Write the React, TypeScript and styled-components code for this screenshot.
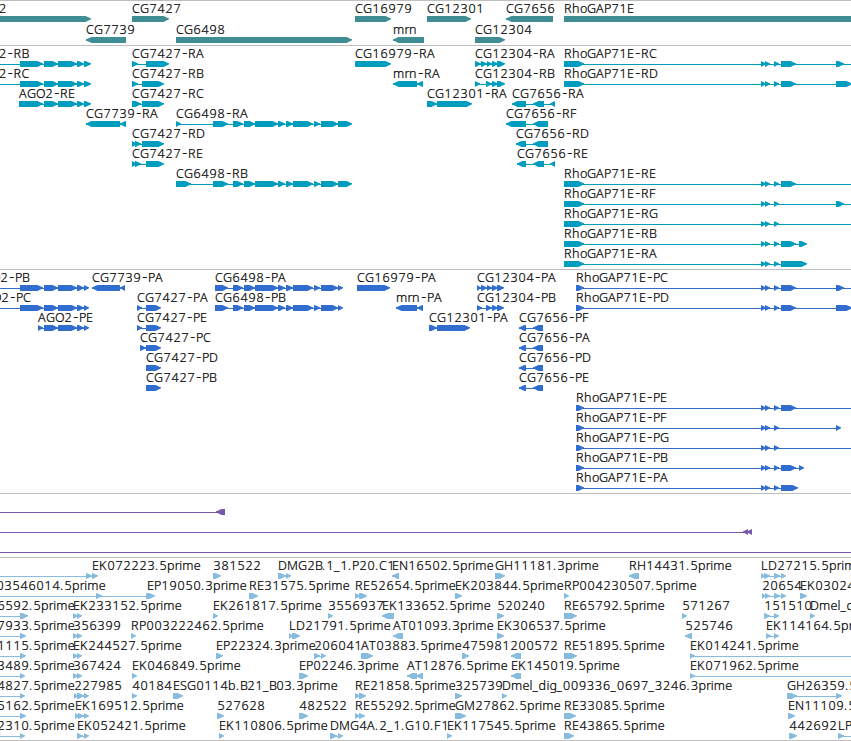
import styled, { createGlobalStyle } from 'styled-components'

const GlobalStyle = createGlobalStyle`
  body {
    margin: 0;
    background: #fff;
    overflow: hidden;
  }
`

const Browser = styled.main`
  display: flex;
  flex-direction: column;
  width: 851px;
  height: 741px;
  overflow: hidden;
  background: #fff;
`

const TrackPanel = styled.section<{ $height: number }>`
  box-sizing: border-box;
  flex: none;
  height: ${({ $height }) => $height}px;
  border-top: 1px solid #bebebe;
  overflow: hidden;
`

const EndRule = styled.div`
  flex: none;
  height: 1px;
  background: #bebebe;
`

const TrackChart = styled.svg<{ $color: string }>`
  display: block;
  color: ${({ $color }) => $color};
`

const Label = styled.text`
  font-family: 'Noto Sans', 'Open Sans', sans-serif;
  font-size: 12.5px;
  font-weight: 300;
  fill: #000;
  stroke: #000;
  stroke-width: 0.22px;
  white-space: pre;
`

const Dash = styled.tspan`
  font-size: 17px;
  stroke-width: 0;
`

interface Feature {
  row: number
  label: string
  x: number
  exons: number[][]
  reverse?: boolean
  from?: number
  to?: number
}

interface Extra {
  reverse?: boolean
  from?: number
  to?: number
}

const WIDTH = 851

// "20-43 44-58" -> [[20, 43], [44, 58]]
const parse = (spans: string) =>
  spans.split(' ').filter(Boolean).map((s) => s.split('-').map(Number))

const f = (row: number, label: string, x: number, spans: string, extra: Extra = {}): Feature => ({
  row,
  label,
  x,
  exons: parse(spans),
  ...extra,
})

const rev = { reverse: true }
const left = { from: 0 }
const right = { to: WIDTH }

const genes: Feature[] = [
  f(0, 'AGO2', -27.5, '0-91'),
  f(1, 'CG7739', 86, '86-126', rev),
  f(0, 'CG7427', 132, '132-169'),
  f(1, 'CG6498', 176, '176-352'),
  f(0, 'CG16979', 355, '355-391'),
  f(1, 'mrn', 393, '393-424', rev),
  f(0, 'CG12301', 427, '427-471'),
  f(1, 'CG12304', 475, '475-505'),
  f(0, 'CG7656', 506, '506-553', rev),
  f(0, 'RhoGAP71E', 564, '564-870'),
]

const ago2 = '44-58 58-77 77-84'
const cg6498 = '233-243 244-255 255-278 278-285 286-293 293-313 314-320 321-338'
const rho = '761-766 765-770 774-779'

const transcripts: Feature[] = [
  f(0, 'AGO2-RB', -27.5, `20-43 ${ago2} 84-91`, left),
  f(1, 'AGO2-RC', -27.5, `20-43 ${ago2} 84-91`, left),
  f(2, 'AGO2-RE', 19, `19-43 ${ago2} 84-91`),
  f(3, 'CG7739-RA', 86, '86-120 120-126', rev),
  f(0, 'CG7427-RA', 132, '132-138 146-169'),
  f(1, 'CG7427-RB', 132, '132-138 142-164'),
  f(2, 'CG7427-RC', 132, '132-141 142-164'),
  f(4, 'CG7427-RD', 132, '132-137 135-141 142-164'),
  f(5, 'CG7427-RE', 132, '132-137 135-141 146-164'),
  f(3, 'CG6498-RA', 176, `176-181 213-228 ${cg6498} 338-352`),
  f(6, 'CG6498-RB', 176, `176-191 213-228 ${cg6498} 338-352`),
  f(0, 'CG16979-RA', 355, '355-359 356-391'),
  f(1, 'mrn-RA', 393, '393-417 417-423', rev),
  f(2, 'CG12301-RA', 427, '427-437 437-472'),
  f(0, 'CG12304-RA', 475, '475-481 481-487 487-492 492-498 497-505'),
  f(1, 'CG12304-RB', 475, '475-480 486-492 492-498 497-505'),
  f(2, 'CG7656-RA', 512, '512-526 533-544 550-555', rev),
  f(3, 'CG7656-RF', 506, '506-526 533-548', rev),
  f(4, 'CG7656-RD', 516, '516-526 533-548', rev),
  f(5, 'CG7656-RE', 517, '517-526 533-544 550-555', rev),
  f(0, 'RhoGAP71E-RC', 564, `564-584 ${rho} 781-796 836-844`, right),
  f(1, 'RhoGAP71E-RD', 564, `564-584 ${rho} 781-796 836-852`, right),
  f(6, 'RhoGAP71E-RE', 564, `564-584 ${rho} 781-796`, right),
  f(7, 'RhoGAP71E-RF', 564, `564-584 ${rho} 836-844`, right),
  f(8, 'RhoGAP71E-RG', 564, `564-584 ${rho}`, right),
  f(9, 'RhoGAP71E-RB', 564, `564-584 ${rho} 781-796 799-807`),
  f(10, 'RhoGAP71E-RA', 564, `564-584 ${rho} 781-807`),
]

const proteins: Feature[] = [
  f(0, 'AGO2-PB', -26, `20-43 ${ago2} 84-89`, left),
  f(1, 'AGO2-PC', -25, `20-43 ${ago2} 84-89`, left),
  f(2, 'AGO2-PE', 38, `38-43 ${ago2} 84-89`),
  f(0, 'CG7739-PA', 92, '92-120 120-125', rev),
  f(1, 'CG7427-PA', 137, '137-142 146-161'),
  f(2, 'CG7427-PE', 137, '137-142 146-161'),
  f(3, 'CG7427-PC', 140, '140-146 146-161'),
  f(4, 'CG7427-PD', 146, '146-161'),
  f(5, 'CG7427-PB', 146, '146-161'),
  f(0, 'CG6498-PA', 215, `215-228 ${cg6498} 338-343`),
  f(1, 'CG6498-PB', 215, `215-228 ${cg6498} 338-343`),
  f(0, 'CG16979-PA', 357, '357-390'),
  f(1, 'mrn-PA', 396, '396-417 417-423', rev),
  f(2, 'CG12301-PA', 429, '429-437 437-470'),
  f(0, 'CG12304-PA', 477, '477-481 481-487 487-492 492-498 497-504'),
  f(1, 'CG12304-PB', 477, '477-482 486-492 492-498 497-504'),
  f(2, 'CG7656-PF', 519, '519-526 533-543', rev),
  f(3, 'CG7656-PA', 519, '519-526 533-543', rev),
  f(4, 'CG7656-PD', 519, '519-526 533-543', rev),
  f(5, 'CG7656-PE', 519, '519-526 533-543', rev),
  f(0, 'RhoGAP71E-PC', 576, `576-584 ${rho} 781-796 836-844`, right),
  f(1, 'RhoGAP71E-PD', 576, `576-584 ${rho} 781-796 836-852`, right),
  f(6, 'RhoGAP71E-PE', 576, `576-584 ${rho} 781-796`, right),
  f(7, 'RhoGAP71E-PF', 576, `576-584 ${rho} 836-841`),
  f(8, 'RhoGAP71E-PG', 576, `576-584 ${rho}`, right),
  f(9, 'RhoGAP71E-PB', 576, `576-584 ${rho} 781-796 799-804`),
  f(10, 'RhoGAP71E-PA', 576, `576-584 ${rho} 781-798`),
]

const noncoding: Feature[] = [
  f(0, '', 0, '216-225', { ...rev, ...left }),
  f(1, '', 0, '743-748 747-752', { ...rev, ...left }),
  f(2, '', 0, '', { ...left, ...right }),
]

const ests: Feature[] = [
  f(0, 'EK072223.5prime', 92, '86-92 92-98', left),
  f(0, '381522', 213, '213-221'),
  f(0, 'DMG2B.1_1.P20.C1', 278, '278-286 286-291'),
  f(0, 'EN16502.5prime', 392, '392-399', rev),
  f(0, 'GH11181.3prime', 495, '495-505'),
  f(0, 'RH14431.5prime', 629, '629-639', rev),
  f(0, 'LD27215.5prime', 761, '761-765 764-770 774-780 781-786'),

  f(1, '03546014.5prime', -4, '96-102 146-155', left),
  f(1, 'EP19050.3prime', 147, ''),
  f(1, 'RE31575.5prime', 249, '249-258'),
  f(1, 'RE52654.5prime', 355, '355-360 359-367'),
  f(1, 'EK203844.5prime', 455, '455-462'),
  f(1, 'RP004230507.5prime', 564, '564-569'),
  f(1, '20654', 762, '762-766 765-770 774-780 781-786'),
  f(1, 'EK03024', 800, '800-807'),

  f(2, '6592.5prime', -3, '20-28', left),
  f(2, 'EK233152.5prime', 73, '73-78 77-82'),
  f(2, 'EK261817.5prime', 213, '213-218'),
  f(2, '3556937', 328, '328-333'),
  f(2, 'EK133652.5prime', 382, '382-394', rev),
  f(2, '520240', 497, '497-504'),
  f(2, 'RE65792.5prime', 564, '564-577'),
  f(2, '571267', 682, '682-687'),
  f(2, '151510', 764, '764-770 774-779'),
  f(2, 'Dmel_dig', 810, '810-815'),

  f(3, '7933.5prime', -3, '20-26', left),
  f(3, '356399', 73, '73-78 77-82'),
  f(3, 'RP003222462.5prime', 131, '131-136'),
  f(3, 'LD21791.5prime', 289, '289-293 292-300'),
  f(3, 'AT01093.3prime', 393, '393-403', rev),
  f(3, 'EK306537.5prime', 497, '497-504'),
  f(3, '525746', 685, '685-692', rev),
  f(3, 'EK114164.5prime', 766, '766-771 774-779'),

  f(4, '1115.5prime', -3, '20-26', left),
  f(4, 'EK244527.5prime', 73, '73-78 77-82'),
  f(4, 'EP22324.3prime', 216, '216-223'),
  f(4, '206041', 314, '314-320 321-326'),
  f(4, 'AT03883.5prime', 361, '361-373'),
  f(4, '475981', 462, '462-469'),
  f(4, '200572', 510, '511-521', rev),
  f(4, 'RE51895.5prime', 564, '564-577'),
  f(4, 'EK014241.5prime', 690, '690-695', right),

  f(5, '3489.5prime', -3, '20-25', left),
  f(5, '367424', 73, '73-78 77-82'),
  f(5, 'EK046849.5prime', 132, '132-137'),
  f(5, 'EP02246.3prime', 299, '299-308'),
  f(5, 'AT12876.5prime', 407, '407-417 416-423', rev),
  f(5, 'EK145019.5prime', 511, '511-521', rev),
  f(5, 'EK071962.5prime', 690, '690-695', right),

  f(6, '4827.5prime', -3, '20-25', left),
  f(6, '227985', 74, '74-78 77-84 84-89'),
  f(6, '40184', 132, '132-137'),
  f(6, 'ESG0114b.B21_B03.3prime', 173, '173-183'),
  f(6, 'RE21858.5prime', 355, '355-360 359-366'),
  f(6, '325739', 455, '455-462'),
  f(6, 'Dmel_dig_009336_0697_3246.3prime', 502, '502-507'),
  f(6, 'GH26359.5prime', 787, '787-797 836-842'),

  f(7, '5162.5prime', -3, '20-26', left),
  f(7, 'EK169512.5prime', 75, '75-80 78-84 84-89'),
  f(7, '527628', 217, '217-224'),
  f(7, '482522', 299, '299-308'),
  f(7, 'RE55292.5prime', 355, '355-360 359-365'),
  f(7, 'GM27862.5prime', 455, '455-466'),
  f(7, 'RE33085.5prime', 564, '564-576'),
  f(7, 'EN11109.5prime', 788, '788-795'),

  f(8, '2310.5prime', -3, '20-25', left),
  f(8, 'EK052421.5prime', 77, '77-83 84-89'),
  f(8, 'EK110806.5prime', 219, '219-224'),
  f(8, 'DMG4A.2_1.G10.F1', 330, '330-337 338-343'),
  f(8, 'EK117545.5prime', 447, '447-452'),
  f(8, 'RE43865.5prime', 564, '564-574'),
  f(8, '442692', 789, '789-797'),
  f(8, 'LP', 838, '838-844', right),
]

const tracks = [
  { name: 'genes', color: '#408e94', height: 45, rowHeight: 21, features: genes },
  { name: 'transcripts', color: '#009dbf', height: 224, rowHeight: 20, features: transcripts },
  { name: 'proteins', color: '#316ccf', height: 224, rowHeight: 20, features: proteins },
  { name: 'noncoding', color: '#7758a8', height: 64, rowHeight: 20, features: noncoding },
  { name: 'ests', color: '#88bcdf', height: 183, rowHeight: 20, features: ests },
]

const advances: Record<string, number> = {
  C: 8, G: 9, E: 7, R: 8, A: 8, P: 7, B: 7, D: 9, K: 8, F: 7, H: 9, L: 7, M: 11,
  N: 9, O: 9, S: 7, T: 7, '-': 7, _: 6, '.': 4,
  b: 8, c: 6, d: 8, e: 7, g: 7, h: 8, i: 3, l: 3, m: 11.5, n: 8, o: 7, p: 7.8, r: 4.5,
}

const glyphShift = (ch: string) => {
  if (ch === '-') return 0.9
  if (ch >= '0' && ch <= '9') return 0.4
  return 0
}

function charPositions(text: string, start: number) {
  let pen = start
  return [...text]
    .map((ch) => {
      const x = pen + glyphShift(ch)
      pen += advances[ch] ?? 8
      return x
    })
    .join(' ')
}

function arrowPath([start, end]: number[], top: number, reverse?: boolean) {
  const head = Math.min(5.5, end - start)
  const [tail, tip, dir] = reverse ? [end, start, 1] : [start, end, -1]
  return [
    `M${tail} ${top}`,
    `H${tip + dir * head}`,
    `L${tip + dir} ${top + 1.9}`,
    `L${tip} ${top + 2.3}`,
    `V${top + 3.2}`,
    `L${tip + dir} ${top + 3.8}`,
    `L${tip + dir * head} ${top + 6}`,
    `H${tail}Z`,
  ].join('')
}

interface TrackProps {
  color: string
  height: number
  rowHeight: number
  features: Feature[]
}

function Track({ color, height, rowHeight, features }: TrackProps) {
  return (
    <TrackPanel $height={height}>
      <TrackChart $color={color} width={WIDTH} height={height - 1}>
        {features.map((feature) => {
          const { row, label, x, exons, reverse } = feature
          // chart starts one pixel below the rule
          const top = row * rowHeight + 15
          const from = feature.from ?? exons[0]?.[0] ?? 0
          const to = feature.to ?? exons[exons.length - 1]?.[1] ?? from
          const [name, isoform] = label.split('-')
          return (
            <g key={`${row}-${x}-${label}`}>
              <rect x={from} y={top + 3} width={Math.max(0, to - from - (feature.to ? 0 : 1))} height={1} fill="currentColor" />
              {exons.map((exon, i) => (
                <path key={i} d={arrowPath(exon, top, reverse)} fill="currentColor" />
              ))}
              {label && (
                <Label x={charPositions(label, x)} y={top - 3}>
                  {name}
                  {isoform && <Dash>-</Dash>}
                  {isoform}
                </Label>
              )}
            </g>
          )
        })}
      </TrackChart>
    </TrackPanel>
  )
}

export default function App() {
  return (
    <>
      <GlobalStyle />
      <Browser>
        {tracks.map(({ name, ...track }) => (
          <Track key={name} {...track} />
        ))}
        <EndRule />
      </Browser>
    </>
  )
}
